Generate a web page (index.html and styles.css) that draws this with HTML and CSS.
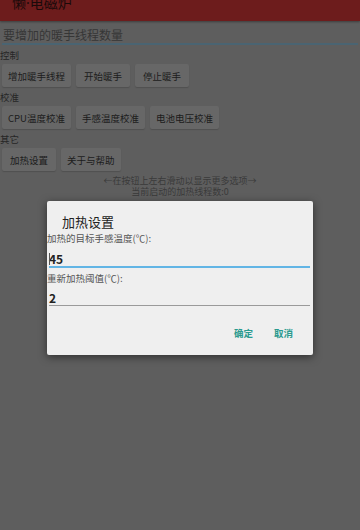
FILE: index.html
```html
<!DOCTYPE html>
<html lang="zh-CN">
<head>
  <meta charset="UTF-8" />
  <meta name="viewport" content="width=device-width, initial-scale=1.0"/>
  <title>懒·电磁炉</title>
  <link rel="stylesheet" href="styles.css">
</head>
<body>
  <header class="appbar">
    <h1>懒·电磁炉</h1>
  </header>

  <main class="content">
    <div class="count-field">要增加的暖手线程数量</div>

    <div class="group-label">控制</div>
    <div class="btn-row">
      <button>增加暖手线程</button>
      <button>开始暖手</button>
      <button>停止暖手</button>
    </div>

    <div class="group-label">校准</div>
    <div class="btn-row">
      <button>CPU温度校准</button>
      <button>手感温度校准</button>
      <button>电池电压校准</button>
    </div>

    <div class="group-label">其它</div>
    <div class="btn-row">
      <button>加热设置</button>
      <button>关于与帮助</button>
    </div>

    <p class="hint">←在按钮上左右滑动以显示更多选项→<br>当前启动的加热线程数:0</p>
  </main>

  <!-- settings dialog over the dimmed page -->
  <div class="dialog">
    <h2>加热设置</h2>
    <div class="field-label">加热的目标手感温度(℃):</div>
    <div class="field active"><span class="caret"></span>45</div>
    <div class="field-label">重新加热阈值(℃):</div>
    <div class="field">2</div>
    <div class="actions">
      <span>确定</span>
      <span>取消</span>
    </div>
  </div>
</body>
</html>
```

FILE: styles.css
```css
body {
  margin: 0;
  width: 360px;
  height: 530px;
  background: #5e5e5e;
  font-family: "Noto Sans CJK SC", "Noto Sans", sans-serif;
  color: #1c1c1c;
  overflow: hidden;
  position: relative;
}
.appbar {
  height: 21px;
  background: #6d1c1c;
  box-shadow: 0 1px 2px rgba(0, 0, 0, 0.35);
  overflow: hidden;
}
.appbar h1 {
  margin: -4px 0 0 12px;
  font-family: "Noto Sans", "Noto Sans CJK SC", sans-serif;
  font-size: 14px;
  line-height: 14px;
  font-weight: normal;
  color: #1a0a0a;
}
.content {
  padding: 0 2px;
}
.count-field {
  padding-top: 7px;
  padding-left: 1px;
  height: 14px;
  line-height: 14px;
  padding-bottom: 1px;
  font-size: 12px;
  color: #363636;
  border-bottom: 2px solid #4a6472;
}
.group-label {
  margin: 4px 0 0 -2px;
  font-size: 9.5px;
  line-height: 12px;
  color: #262626;
}
.btn-row {
  display: flex;
  gap: 5px;
  margin-top: 3px;
}
.btn-row button {
  height: 23px;
  min-width: 54px;
  padding: 0 6px;
  border: none;
  border-radius: 2px;
  background: #676767;
  box-shadow: 0 1px 1px rgba(0, 0, 0, 0.15);
  font-family: inherit;
  font-size: 9.5px;
  color: #1c1c1c;
}
.hint {
  margin: 4px 0 0;
  text-align: center;
  font-size: 9px;
  line-height: 11px;
  color: #3a3a3a;
}
.dialog {
  position: absolute;
  left: 47px;
  top: 201px;
  width: 266px;
  height: 154px;
  background: #efefef;
  box-shadow: 0 2px 8px rgba(0, 0, 0, 0.5);
  border-radius: 2px;
}
.dialog h2 {
  margin: 14px 0 0 15px;
  font-size: 13px;
  line-height: 14px;
  font-weight: normal;
  color: #222;
}
.field-label {
  margin-top: 3px;
  font-size: 9.5px;
  line-height: 12px;
  color: #555;
}
.field + .field-label {
  margin-top: 4px;
}
.field {
  margin: 0 3px 0 2px;
  padding-top: 7px;
  line-height: 14px;
  font-size: 12px;
  font-weight: bold;
  color: #222;
  border-bottom: 1px solid #9a9a9a;
  position: relative;
}
.field.active {
  line-height: 15px;
  border-bottom: 2px solid #62b5e5;
}
.caret {
  position: absolute;
  left: 0;
  top: 9px;
  width: 1px;
  height: 12px;
  background: #555;
}
.actions {
  display: flex;
  justify-content: flex-end;
  gap: 21px;
  margin-top: 21px;
  padding-right: 20px;
  font-size: 9.5px;
  line-height: 12px;
  font-weight: bold;
  color: #2a9a8e;
}
```
